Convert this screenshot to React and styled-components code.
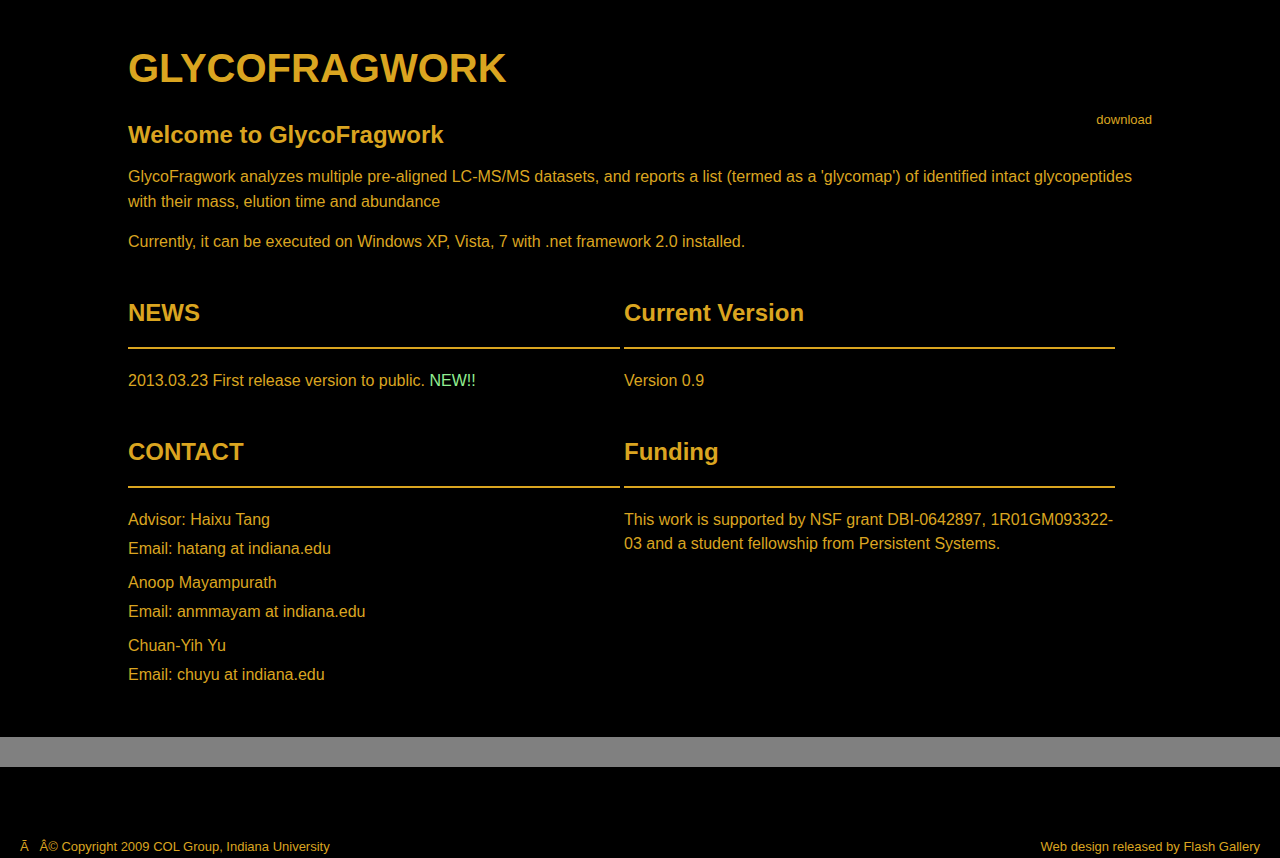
import React from 'react'
import styled, { createGlobalStyle } from 'styled-components'

const GlobalStyle = createGlobalStyle`
  html, body {
    margin: 0;
    padding: 0;
    background: #000;
  }
  body {
    font-family: "Liberation Sans", Arial, Helvetica, sans-serif;
    color: #daa520;
  }
`

const Page = styled.div`
  display: flex;
  flex-direction: column;
  min-height: 858px;
`

const Container = styled.div`
  width: 1024px;
  margin: 0 auto;
  padding-top: 45px;
`

const Logo = styled.h1`
  margin: 0;
  font-size: 40px;
  line-height: 46px;
  font-weight: bold;
`

const WelcomeRow = styled.div`
  display: flex;
  justify-content: space-between;
  align-items: flex-start;
  margin-top: 30px;
`

const Heading = styled.h2`
  margin: 0;
  font-size: 24px;
  line-height: 28px;
  font-weight: bold;
`

const NavLink = styled.a`
  font-size: 13px;
  line-height: 16px;
  color: #daa520;
  text-decoration: none;
  margin-top: -9px;
`

const Text = styled.p`
  margin: ${p => p.$mt || 0}px 0 0;
  font-size: 16px;
  line-height: ${p => p.$lh || 25}px;
`

const Columns = styled.div`
  display: grid;
  grid-template-columns: 492px 491px;
  column-gap: 4px;
  row-gap: 45px;
  margin-top: 45px;
`

const Section = styled.section`
  display: flex;
  flex-direction: column;
`

const SectionTitle = styled.h2`
  margin: 0 0 19px;
  font-size: 24px;
  line-height: 28px;
  font-weight: bold;
  padding-bottom: 20px;
  border-bottom: 2px solid #daa520;
`

const Highlight = styled.span`
  color: #90ee90;
`

const Contact = styled.div`
  display: flex;
  flex-direction: column;
  gap: 4px;
  & + & {
    margin-top: 9px;
  }
`

const Band = styled.div`
  height: 30px;
  background: #808080;
  margin-top: 50px;
`

const Footer = styled.footer`
  display: flex;
  justify-content: space-between;
  padding: 72px 20px 0;
  font-size: 13px;
  line-height: 16px;
`

const contacts = [
  { name: 'Advisor: Haixu Tang', email: 'Email: hatang at indiana.edu' },
  { name: 'Anoop Mayampurath', email: 'Email: anmmayam at indiana.edu' },
  { name: 'Chuan-Yih Yu', email: 'Email: chuyu at indiana.edu' },
]

export default function App() {
  return (
    <Page>
      <GlobalStyle />
      <Container>
        <Logo>GLYCOFRAGWORK</Logo>
        <WelcomeRow>
          <Heading>Welcome to GlycoFragwork</Heading>
          <NavLink href="#">download</NavLink>
        </WelcomeRow>
        <Text $mt={15}>
          GlycoFragwork analyzes multiple pre-aligned LC-MS/MS datasets, and reports a list (termed as a 'glycomap') of identified intact glycopeptides with their mass, elution time and abundance
        </Text>
        <Text $mt={15}>
          Currently, it can be executed on Windows XP, Vista, 7 with .net framework 2.0 installed.
        </Text>
        <Columns>
          <Section>
            <SectionTitle>NEWS</SectionTitle>
            <Text>
              2013.03.23 First release version to public. <Highlight>NEW!!</Highlight>
            </Text>
          </Section>
          <Section>
            <SectionTitle>Current Version</SectionTitle>
            <Text>Version 0.9</Text>
          </Section>
          <Section>
            <SectionTitle>CONTACT</SectionTitle>
            {contacts.map(c => (
              <Contact key={c.name}>
                <Text>{c.name}</Text>
                <Text>{c.email}</Text>
              </Contact>
            ))}
          </Section>
          <Section>
            <SectionTitle>Funding</SectionTitle>
            <Text $lh={24} $mt={1}>
              This work is supported by NSF grant DBI-0642897, 1R01GM093322-03 and a student fellowship from Persistent Systems.
            </Text>
          </Section>
        </Columns>
      </Container>
      <Band />
      <Footer>
        <span>Ã{'\u00a0\u00a0\u00a0'}Â© Copyright 2009 COL Group, Indiana University</span>
        <span>Web design released by Flash Gallery</span>
      </Footer>
    </Page>
  )
}
